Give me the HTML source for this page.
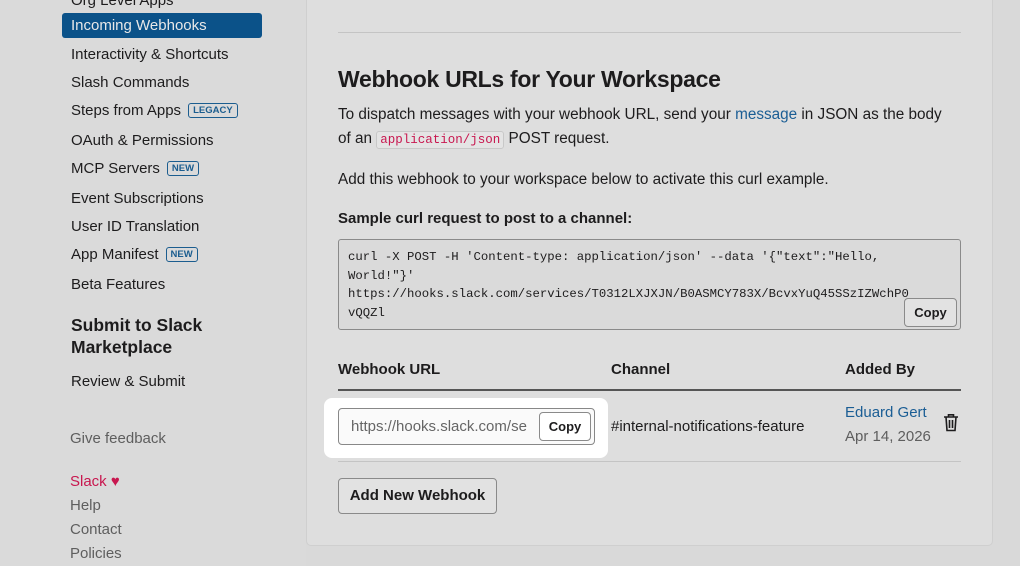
<!DOCTYPE html>
<html><head><meta charset="utf-8"><style>
*{margin:0;padding:0;box-sizing:border-box}
body{width:1020px;height:566px;overflow:hidden;background:#d9d9d9;font-family:"Liberation Sans",sans-serif;color:#1d1c1d;position:relative}
.sb{position:absolute;left:0;top:0;width:306px;height:566px;background:#dadada}
.it{position:absolute;left:71px;font-size:15px;color:#1d1c1d;white-space:nowrap}
.act{position:absolute;left:62px;top:13px;width:200px;height:25px;background:#0b5289;border-radius:3px;color:#e8e8e8;font-size:15px;padding:4px 9px}
.bd{display:inline-block;border:1px solid #1b5d8f;color:#1b5d8f;border-radius:3px;font-size:9.5px;font-weight:bold;padding:1px 4px;margin-left:7px;vertical-align:2px}
.g{color:#5e5e5e}
.panel{position:absolute;left:306px;top:-10px;width:687px;height:556px;background:#dedede;border:1px solid #cfcfcf;border-radius:5px}
.a{position:absolute}
.mono{font-family:"Liberation Mono",monospace}
.btn{position:absolute;background:#e2e2e2;border:1px solid #8a8a8a;border-radius:4px;font-weight:bold;font-size:13px;text-align:center}
</style></head><body>
<div class="sb">
<div class="it" style="top:-8px">Org Level Apps</div>
<div class="act">Incoming Webhooks</div>
<div class="it" style="top:46px">Interactivity &amp; Shortcuts</div>
<div class="it" style="top:74px">Slash Commands</div>
<div class="it" style="top:102px">Steps from Apps<span class="bd">LEGACY</span></div>
<div class="it" style="top:132px">OAuth &amp; Permissions</div>
<div class="it" style="top:160px">MCP Servers<span class="bd">NEW</span></div>
<div class="it" style="top:190px">Event Subscriptions</div>
<div class="it" style="top:218px">User ID Translation</div>
<div class="it" style="top:246px">App Manifest<span class="bd">NEW</span></div>
<div class="it" style="top:276px">Beta Features</div>
<div class="it" style="top:314px;font-weight:bold;font-size:17.5px;line-height:22px">Submit to Slack<br>Marketplace</div>
<div class="it" style="top:373px">Review &amp; Submit</div>
<div class="it g" style="left:70px;top:430px">Give feedback</div>
<div class="it" style="left:70px;top:473px;color:#c8174f">Slack ♥</div>
<div class="it g" style="left:70px;top:497px">Help</div>
<div class="it g" style="left:70px;top:521px">Contact</div>
<div class="it g" style="left:70px;top:545px">Policies</div>
</div>
<div class="panel"></div>
<div class="a" style="left:338px;top:32px;width:623px;height:1px;background:#c4c4c4"></div>
<div class="a" style="left:338px;top:66px;font-size:23px;font-weight:bold;letter-spacing:-0.3px">Webhook URLs for Your Workspace</div>
<div class="a" style="left:338px;top:103px;font-size:15.3px;line-height:24px;width:640px">To dispatch messages with your webhook URL, send your <span style="color:#1a5d94">message</span> in JSON as the body<br>of an <span class="mono" style="color:#c8174f;font-size:12.5px;background:#e4e4e4;border:1px solid #c8c8c8;border-radius:3px;padding:1px 3px">application/json</span> POST request.</div>
<div class="a" style="left:338px;top:171px;font-size:15.3px">Add this webhook to your workspace below to activate this curl example.</div>
<div class="a" style="left:338px;top:210px;font-size:15px;font-weight:bold">Sample curl request to post to a channel:</div>
<div class="a mono" style="left:338px;top:239px;width:623px;height:91px;border:1px solid #8a8a8a;border-radius:3px;background:#dadada;font-size:12.3px;line-height:18.5px;padding:8px 9px;white-space:nowrap">curl -X POST -H 'Content-type: application/json' --data '{"text":"Hello,<br>World!"}'<br>https://hooks.slack.com/services/T0312LXJXJN/B0ASMCY783X/BcvxYuQ45SSzIZWchP0<br>vQQZl</div>
<div class="btn" style="left:904px;top:298px;width:53px;height:29px;line-height:27px">Copy</div>
<div class="a" style="left:338px;top:361px;font-size:15px;font-weight:bold">Webhook URL</div>
<div class="a" style="left:611px;top:361px;font-size:15px;font-weight:bold">Channel</div>
<div class="a" style="left:845px;top:361px;font-size:15px;font-weight:bold">Added By</div>
<div class="a" style="left:338px;top:389px;width:623px;height:2px;background:#555"></div>
<div class="a" style="left:324px;top:398px;width:284px;height:60px;background:#fff;border-radius:8px"></div>
<div class="a" style="left:338px;top:408px;width:257px;height:37px;border:1px solid #888;border-radius:4px;background:#fafafa;overflow:hidden;font-size:15px;color:#666;padding:9px 12px;white-space:nowrap">https://hooks.slack.com/se</div>
<div class="btn" style="left:539px;top:412px;width:52px;height:29px;line-height:27px;background:#fff">Copy</div>
<div class="a" style="left:611px;top:418px;font-size:15px">#internal-notifications-feature</div>
<div class="a" style="left:845px;top:404px;font-size:15px;color:#1a5d94">Eduard Gert</div>
<div class="a" style="left:845px;top:428px;font-size:15px;color:#5e5e5e">Apr 14, 2026</div>
<svg class="a" style="left:943px;top:413px" width="16" height="19" viewBox="0 0 16 19" fill="none" stroke="#1d1c1d" stroke-width="1.6"><path d="M1 4h14M5.5 4V1.8h5V4M3 4l1 13.5h8L13 4M6.5 7v8M9.5 7v8"/></svg>
<div class="a" style="left:338px;top:461px;width:623px;height:1px;background:#c4c4c4"></div>
<div class="btn" style="left:338px;top:478px;width:159px;height:36px;line-height:34px;font-size:15px">Add New Webhook</div>
</body></html>
